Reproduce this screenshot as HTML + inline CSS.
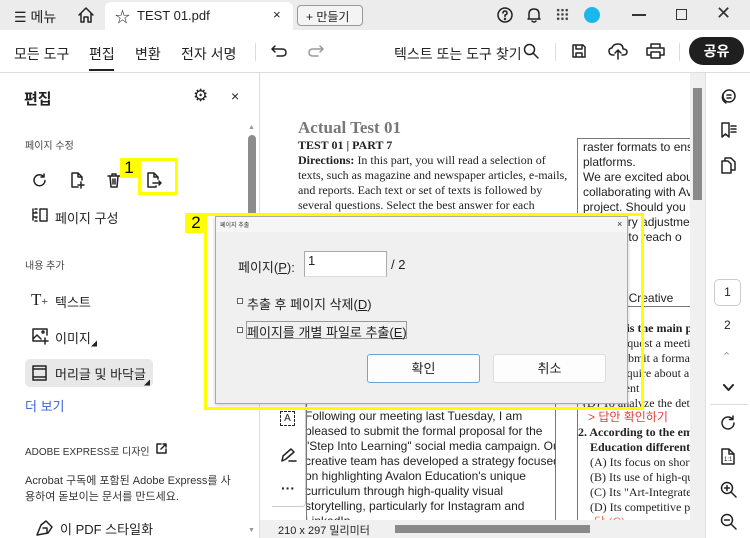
<!DOCTYPE html>
<html><head><meta charset="utf-8"><style>
*{margin:0;padding:0;box-sizing:border-box}
body{width:750px;height:538px;overflow:hidden;background:#fff;font-family:"Liberation Sans","Noto Sans CJK KR",sans-serif;color:#222;position:relative}
.a{position:absolute;white-space:nowrap}
.s{font-family:"Liberation Serif","Noto Serif CJK SC",serif}
svg{position:absolute;fill:none;stroke:#222;stroke-width:1.5;stroke-linecap:round;stroke-linejoin:round}
.yb{position:absolute;border:3px solid #ffff00}
.yl{position:absolute;background:#ffff00;color:#000;font-size:17px;text-align:center;line-height:20px}
.clip{position:absolute;overflow:hidden}
.clip .a{position:absolute}
</style></head><body>
<!-- title bar -->
<div class="a" style="left:0;top:0;width:750px;height:30px;background:#ececec"></div>
<div class="a" style="left:105px;top:2px;width:188px;height:28px;background:#fff;border-radius:6px 6px 0 0"></div>
<div class="a" style="left:14px;top:7px;font-size:14px">☰ 메뉴</div>
<svg style="left:77px;top:6px" width="18" height="18" viewBox="0 0 18 18"><path d="M2 9 L9 2 L16 9 M4 7 V16 H7 V11 H11 V16 H14 V7"/></svg>
<div class="a" style="left:115px;top:6px;font-size:15px">☆</div>
<div class="a" style="left:137px;top:8px;font-size:13px">TEST 01.pdf</div>
<div class="a" style="left:273px;top:7px;font-size:13px">×</div>
<div class="a" style="left:297px;top:5px;width:66px;height:21px;border:1px solid #999;border-radius:4px;font-size:12px;padding:2px 0 0 8px;background:#f4f4f4">+ 만들기</div>
<svg style="left:497px;top:7px" width="16" height="16" viewBox="0 0 16 16"><circle cx="8" cy="8" r="7"/><path d="M6 6 Q6 4 8 4 Q10 4 10 6 Q10 7.5 8 8 V9.5"/><circle cx="8" cy="12" r=".5"/></svg>
<svg style="left:526px;top:6px" width="16" height="18" viewBox="0 0 16 18"><path d="M3 13 V8 Q3 3 8 3 Q13 3 13 8 V13 H2 H14 M6 15 Q8 17 10 15"/></svg>
<div class="a" style="left:556px;top:8px;width:13px;height:13px;background:radial-gradient(circle,#444 1.2px,transparent 1.5px) 0 0/4.3px 4.3px"></div>
<div class="a" style="left:584px;top:7px;width:16px;height:16px;border-radius:50%;background:#1ab7ea"></div>
<div class="a" style="left:632px;top:14px;width:14px;height:1.5px;background:#333"></div>
<div class="a" style="left:676px;top:9px;width:11px;height:11px;border:1.3px solid #333"></div>
<div class="a" style="left:716px;top:3px;font-size:18px;color:#333">✕</div>
<!-- toolbar -->
<div class="a" style="left:0;top:72px;width:750px;height:1px;background:#ddd"></div>
<div class="a" style="left:14px;top:44px;font-size:14px">모든 도구</div>
<div class="a" style="left:89px;top:44px;font-size:14px">편집</div>
<div class="a" style="left:89px;top:69px;width:25px;height:2px;background:#222"></div>
<div class="a" style="left:135px;top:44px;font-size:14px">변환</div>
<div class="a" style="left:181px;top:44px;font-size:14px">전자 서명</div>
<div class="a" style="left:255px;top:43px;width:1px;height:18px;background:#ddd"></div>
<svg style="left:270px;top:44px" width="18" height="14" viewBox="0 0 18 14"><path d="M5 2 L2 5 L5 8 M2 5 H12 Q16 5 16 8.5 Q16 12 12 12 H7"/></svg>
<svg style="left:307px;top:44px;stroke:#999" width="18" height="14" viewBox="0 0 18 14"><path d="M13 2 L16 5 L13 8 M16 5 H6 Q2 5 2 8.5 Q2 12 6 12 H11"/></svg>
<div class="a" style="left:394px;top:44px;font-size:14px">텍스트 또는 도구 찾기</div>
<svg style="left:523px;top:43px" width="16" height="16" viewBox="0 0 16 16"><circle cx="6.5" cy="6.5" r="5"/><path d="M10 10 L15 15"/></svg>
<div class="a" style="left:555px;top:43px;width:1px;height:18px;background:#ddd"></div>
<svg style="left:571px;top:43px" width="16" height="16" viewBox="0 0 16 16"><path d="M2 2 H12 L14 4 V14 H2 Z M5 2 V6 H11 V2 M5 14 V10 H11 V14"/></svg>
<svg style="left:608px;top:42px" width="20" height="18" viewBox="0 0 20 18"><path d="M6 13 H5 Q1 13 1 9 Q1 6 4 6 Q5 2 10 2 Q15 2 15 7 Q19 7 19 10 Q19 13 15 13 H14 M10 17 V8 M7 11 L10 8 L13 11"/></svg>
<svg style="left:646px;top:43px" width="19" height="16" viewBox="0 0 19 16"><path d="M5 5 V1 H14 V5 M4 12 H1 V5 H18 V12 H15 M5 9 H14 V15 H5 Z"/></svg>
<div class="a" style="left:679px;top:43px;width:1px;height:18px;background:#ddd"></div>
<div class="a" style="left:689px;top:37px;width:55px;height:28px;border-radius:14px;background:#1f1f1f;color:#fff;font-size:14px;font-weight:bold;text-align:center;line-height:28px">공유</div>
<!-- left panel -->
<div class="a" style="left:259px;top:73px;width:1px;height:465px;background:#ddd"></div>
<div class="a" style="left:24px;top:88px;font-size:15px;font-weight:bold">편집</div>
<div class="a" style="left:193px;top:86px;font-size:17px">⚙</div>
<div class="a" style="left:231px;top:88px;font-size:14px">×</div>
<div class="a" style="left:248px;top:124px;font-size:7px;color:#999">▲</div>
<div class="a" style="left:248px;top:135px;width:8px;height:100px;background:#8c8c8c;border-radius:4px"></div>
<div class="a" style="left:248px;top:527px;font-size:7px;color:#999">▼</div>
<div class="a" style="left:25px;top:137px;font-size:10px;color:#444">페이지 수정</div>
<svg style="left:32px;top:173px" width="15" height="15" viewBox="0 0 15 15"><path d="M13 7.5 A5.5 5.5 0 1 1 11 3 M12 1 V4 H9"/></svg>
<svg style="left:70px;top:172px" width="15" height="17" viewBox="0 0 15 17"><path d="M8 15 H2 V1 H8 L12 5 V8 M8 1 V5 H12 M11 10 V16 M8 13 H14"/></svg>
<svg style="left:107px;top:172px" width="14" height="17" viewBox="0 0 14 17"><path d="M1 4 H13 M5 4 V2 H9 V4 M3 4 L4 15 H10 L11 4 M6 7 V12 M8 7 V12"/></svg>
<svg style="left:146px;top:172px" width="16" height="17" viewBox="0 0 16 17"><path d="M10 14 V15 H2 V1 H8 L12 5 V7 M8 1 V5 H12 M7 11 H15 M13 9 L15 11 L13 13"/></svg>
<div class="yb" style="left:138px;top:158px;width:40px;height:37px"></div>
<div class="yl" style="left:120px;top:158px;width:18px;height:20px">1</div>
<svg style="left:32px;top:207px" width="16" height="16" viewBox="0 0 16 16"><path d="M1 2 V14 M3 2 H5 M3 14 H5 M8 2 H15 V14 H8 Z M2 6 H5 L4 5 M2 10 H5 L4 11" stroke-dasharray="2 1"/></svg>
<div class="a" style="left:55px;top:208px;font-size:13px">페이지 구성</div>
<div class="a" style="left:25px;top:257px;font-size:10px;color:#444">내용 추가</div>
<div class="a s" style="left:31px;top:290px;font-size:17px">T<span style="font-size:12px">+</span></div>
<div class="a" style="left:55px;top:292px;font-size:13px">텍스트</div>
<svg style="left:32px;top:327px" width="18" height="18" viewBox="0 0 18 18"><path d="M10 14 H1 V2 H15 V8 M1 12 L5 8 L9 12 M13 11 V17 M10 14 H16"/><circle cx="11" cy="5" r="1"/></svg>
<div class="a" style="left:55px;top:328px;font-size:13px">이미지</div>
<div class="a" style="left:91px;top:339px;font-size:6px">◢</div>
<div class="a" style="left:25px;top:359px;width:128px;height:28px;background:#e8e8e8;border-radius:5px"></div>
<svg style="left:32px;top:365px" width="15" height="16" viewBox="0 0 15 16"><path d="M1 1 H14 V15 H1 Z M1 4 H14 M1 12 H14"/></svg>
<div class="a" style="left:55px;top:364px;font-size:13px">머리글 및 바닥글</div>
<div class="a" style="left:144px;top:378px;font-size:6px">◢</div>
<div class="a" style="left:25px;top:396px;font-size:13px;color:#3b63d6">더 보기</div>
<div class="a" style="left:25px;top:443px;font-size:10px;color:#333">ADOBE EXPRESS로 디자인</div>
<svg style="left:156px;top:443px" width="11" height="11" viewBox="0 0 11 11"><path d="M5 1 H1 V10 H10 V6 M7 1 H10 V4 M10 1 L5 6"/></svg>
<div class="a" style="left:25px;top:473px;font-size:11px;color:#333;line-height:16px">Acrobat 구독에 포함된 Adobe Express를 사<br>용하여 돋보이는 문서를 만드세요.</div>
<svg style="left:36px;top:519px" width="18" height="17" viewBox="0 0 18 17"><path d="M1 16 L5 6 L10 2 L16 8 L12 14 Z M7 9 H11 V14"/></svg>
<div class="a" style="left:60px;top:519px;font-size:13px">이 PDF 스타일화</div>
<!-- document -->
<div class="a s" style="left:298px;top:118px;font-size:17px;font-weight:bold;color:#777">Actual Test 01</div>
<div class="a s" style="left:298px;top:138px;font-size:12px;font-weight:bold">TEST 01 | PART 7</div>
<div class="a s" style="left:298px;top:153px;font-size:12px;line-height:15px"><b>Directions:</b> In this part, you will read a selection of<br>texts, such as magazine and newspaper articles, e-mails,<br>and reports. Each text or set of texts is followed by<br>several questions. Select the best answer for each</div>
<div class="clip" style="left:577px;top:138px;width:113px;height:382px;border-left:1px solid #777;border-top:1px solid #777">
<div class="a" style="left:5px;top:1px;font-size:12px;line-height:15px">raster formats to ensu<br>platforms.<br>We are excited about<br>collaborating with Ava<br>project. Should you ha<br>necessary adjustments t<br>hesitate to reach o<br><br>regards,</div>
<div class="a" style="left:5px;top:152px;font-size:12px"><b>Avance</b> Creative</div>
<div class="a" style="left:0;top:167px;width:115px;height:1px;background:#777"></div>
<div class="a s" style="left:5px;top:182px;font-size:12px;line-height:15px"><b>1. What is the main pur</b><br>(A) To request a meeti<br>(B) To submit a forma<br>(C) To inquire about a<br>&nbsp;&nbsp;&nbsp;&nbsp;&nbsp;payment<br>(D) To analyze the det</div>
<div class="a" style="left:10px;top:269px;font-size:12px;color:#e63c3c">&gt;  답안 확인하기</div>
<div class="a s" style="left:0;top:286px;font-size:12px;line-height:15px"><b>2. According to the ema<br>&nbsp;&nbsp;&nbsp;&nbsp;Education different f</b><br>&nbsp;&nbsp;&nbsp;&nbsp;(A) Its focus on short-<br>&nbsp;&nbsp;&nbsp;&nbsp;(B) Its use of high-qua<br>&nbsp;&nbsp;&nbsp;&nbsp;(C) Its "Art-Integrated<br>&nbsp;&nbsp;&nbsp;&nbsp;(D) Its competitive pri</div>
<div class="a" style="left:16px;top:374px;font-size:12px;color:#f47a50">답 (C)</div>
</div>
<div class="a" style="left:555px;top:400px;width:1px;height:120px;background:#777"></div>
<div class="a" style="left:306px;top:400px;width:1px;height:120px;background:#777"></div>
<div class="clip" style="left:307px;top:405px;width:248px;height:115px">
<div class="a" style="left:-2px;top:4px;font-size:12px;line-height:15px">Following our meeting last Tuesday, I am<br>pleased to submit the formal proposal for the<br>"Step Into Learning" social media campaign. Our<br>creative team has developed a strategy focused<br>on highlighting Avalon Education's unique<br>curriculum through high-quality visual<br>storytelling, particularly for Instagram and<br>LinkedIn.</div>
</div>
<div class="a" style="left:272px;top:395px;width:34px;height:112px;background:#fff;border:1px solid #ccc;border-left:none;border-radius:0 0 4px 0"></div>
<div class="a" style="left:280px;top:411px;width:15px;height:15px;border:1px dashed #222;font-size:10px;text-align:center;line-height:13px">A</div>
<svg style="left:280px;top:447px" width="18" height="16" viewBox="0 0 18 16"><path d="M2 14 L3 9 L11 2 L14 5 L6 12 Z M9 14 H16"/></svg>
<div class="a" style="left:281px;top:480px;font-size:14px;font-weight:bold">···</div>
<!-- doc scrollbars -->
<div class="a" style="left:690px;top:73px;width:15px;height:447px;background:#f0f0f0"></div>
<div class="a" style="left:693px;top:88px;width:9px;height:112px;background:#8a8a8a"></div>
<div class="a" style="left:260px;top:520px;width:445px;height:18px;background:#f0f0f0"></div>
<div class="a" style="left:278px;top:522px;font-size:11px">210 x 297 밀리미터</div>
<div class="a" style="left:395px;top:525px;width:195px;height:8px;background:#8a8a8a"></div>
<!-- right rail -->
<div class="a" style="left:705px;top:73px;width:1px;height:465px;background:#e0e0e0"></div>
<svg style="left:720px;top:88px" width="17" height="17" viewBox="0 0 17 17"><circle cx="9" cy="8" r="6"/><path d="M3 6 Q1 12 6 15 M7 7 H11 M7 10 H11"/></svg>
<svg style="left:721px;top:122px" width="16" height="17" viewBox="0 0 16 17"><path d="M1 1 H8 V15 L4.5 12 L1 15 Z M10 4 H15 M10 7 H15 M10 10 H15"/></svg>
<svg style="left:721px;top:157px" width="15" height="17" viewBox="0 0 15 17"><path d="M4 4 V1 H10 L14 5 V13 H10 M1 4 H7 L10 7 V16 H1 Z"/></svg>
<div class="a" style="left:714px;top:279px;width:27px;height:27px;border:1px solid #ccc;border-radius:5px;font-size:12px;text-align:center;line-height:25px">1</div>
<div class="a" style="left:724px;top:318px;font-size:12px">2</div>
<div class="a" style="left:722px;top:350px;font-size:11px;color:#999">⌃</div>
<svg style="left:723px;top:384px" width="11" height="8" viewBox="0 0 11 8"><path d="M1 1 L5.5 6 L10 1" stroke-width="2"/></svg>
<div class="a" style="left:710px;top:404px;width:38px;height:1px;background:#ddd"></div>
<svg style="left:720px;top:415px" width="16" height="16" viewBox="0 0 16 16"><path d="M14 8 A6 6 0 1 1 12 3.5 M13 1 V4.5 H9.5"/></svg>
<svg style="left:720px;top:448px" width="16" height="18" viewBox="0 0 16 18"><path d="M9 1 H2 V16 H14 V6 Z M9 1 V6 H14"/><text x="4" y="13" font-size="6" fill="#222" stroke="none">1:1</text></svg>
<svg style="left:720px;top:481px" width="17" height="17" viewBox="0 0 17 17"><circle cx="7" cy="7" r="5.5"/><path d="M11 11 L16 16 M4.5 7 H9.5 M7 4.5 V9.5"/></svg>
<svg style="left:720px;top:513px" width="17" height="17" viewBox="0 0 17 17"><circle cx="7" cy="7" r="5.5"/><path d="M11 11 L16 16 M4.5 7 H9.5"/></svg>
<!-- dialog -->
<div class="a" style="left:215px;top:216px;width:413px;height:188px;background:#f0f0f0;border:1px solid #aaa;box-shadow:0 1px 4px rgba(0,0,0,.2)"></div>
<div class="a" style="left:216px;top:217px;width:411px;height:15px;background:#f6f6f6"></div>
<div class="a" style="left:220px;top:220px;font-size:6px;color:#333">페이지 추출</div>
<div class="a" style="left:617px;top:219px;font-size:9px;color:#333">×</div>
<div class="a" style="left:238px;top:257px;font-size:13px">페이지(<u>P</u>):</div>
<div class="a" style="left:304px;top:251px;width:83px;height:26px;background:#fff;border:1px solid #aaa;border-bottom-color:#ddd;font-size:13px;padding:1px 0 0 3px">1</div>
<div class="a" style="left:391px;top:257px;font-size:13px">/ 2</div>
<div class="a" style="left:237px;top:298px;width:6px;height:6px;border:1px solid #666;background:#fff"></div>
<div class="a" style="left:247px;top:294px;font-size:13px">추출 후 페이지 삭제(<u>D</u>)</div>
<div class="a" style="left:237px;top:327px;width:6px;height:6px;border:1px solid #666;background:#fff"></div>
<div class="a" style="left:246px;top:321px;width:161px;height:18px;border:1px solid #999"></div>
<div class="a" style="left:247px;top:322px;font-size:13px">페이지를 개별 파일로 추출(<u>E</u>)</div>
<div class="a" style="left:367px;top:354px;width:113px;height:29px;background:#fdfdfd;border:1px solid #6aa6dc;border-radius:3px;font-size:13px;text-align:center;line-height:27px">확인</div>
<div class="a" style="left:493px;top:354px;width:113px;height:29px;background:#fdfdfd;border:1px solid #ddd;border-radius:3px;font-size:13px;text-align:center;line-height:27px">취소</div>
<div class="yb" style="left:204px;top:213px;width:440px;height:197px"></div>
<div class="yl" style="left:185px;top:213px;width:22px;height:20px">2</div>
</body></html>
